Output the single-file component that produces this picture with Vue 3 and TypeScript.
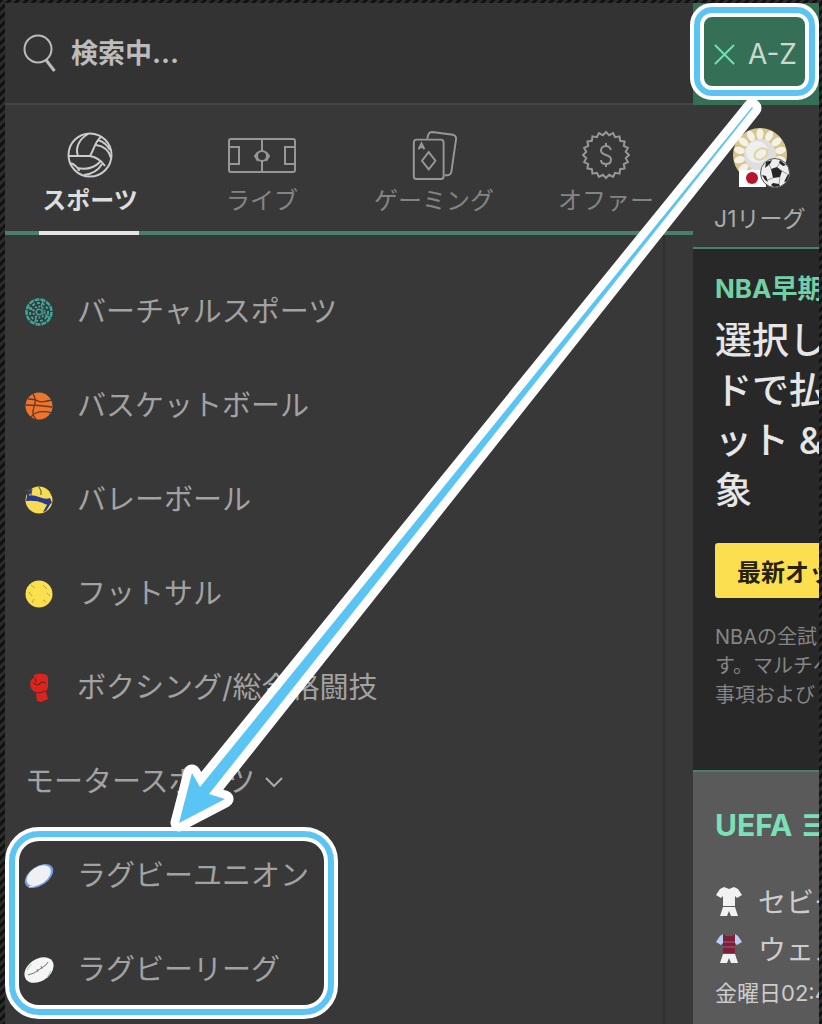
<script setup lang="ts">
import { ref } from 'vue'

interface Tab {
  id: string
  label: string
}
interface Sport {
  id: string
  label: string
}

const tabs: Tab[] = [
  { id: 'sports', label: 'スポーツ' },
  { id: 'live', label: 'ライブ' },
  { id: 'gaming', label: 'ゲーミング' },
  { id: 'offers', label: 'オファー' },
]

const sports: Sport[] = [
  { id: 'virtual', label: 'バーチャルスポーツ' },
  { id: 'basketball', label: 'バスケットボール' },
  { id: 'volleyball', label: 'バレーボール' },
  { id: 'futsal', label: 'フットサル' },
  { id: 'boxing', label: 'ボクシング/総合格闘技' },
]

const rugby: Sport[] = [
  { id: 'union', label: 'ラグビーユニオン' },
  { id: 'league', label: 'ラグビーリーグ' },
]

const active = ref('sports')
const query = ref('')

const badge: string = Array.from({ length: 40 }, (_, i) => {
  const r = i % 2 ? 20 : 23
  const a = (i * Math.PI) / 20
  return `${(24 + r * Math.sin(a)).toFixed(2)},${(24 - r * Math.cos(a)).toFixed(2)}`
}).join(' ')
const petals: number[] = Array.from({ length: 14 }, (_, i) => (i * 360) / 14)
</script>

<template>
  <div class="frame">
    <div class="shell">
      <aside class="menu">
        <label class="search">
          <svg class="search-icon" viewBox="0 0 36 40" aria-hidden="true">
            <circle cx="15" cy="16" r="13.5" />
            <path d="M23 27l8.500 11" stroke-width="3" />
          </svg>
          <input v-model="query" type="text" placeholder="検索中..." aria-label="検索" />
        </label>

        <nav class="tabs">
          <button
            v-for="t in tabs"
            :key="t.id"
            type="button"
            class="tab"
            :class="{ active: active === t.id }"
            @click="active = t.id"
          >
            <svg v-if="t.id === 'sports'" class="tab-icon ball" viewBox="0 0 48 48" aria-hidden="true">
              <circle cx="24" cy="24" r="21.500" />
              <path d="M24 25C28 19 29 10 35 6M24 25H3M24 25c6 1 11 4 15 10M12 25C9 17 13 8 22 3M30 14c8 1 13 5 15 13M32 9c6 2 10 6 12 10M4 32c5 1 9 6 9 8M11 37c9 2 17 0 23-6M18 44c8-1 14-4 18-11" />
            </svg>
            <svg v-else-if="t.id === 'live'" class="tab-icon pitch" viewBox="0 0 70 48" aria-hidden="true">
              <rect x="2" y="8" width="66" height="33" rx="2" />
              <path d="M2 16h10v17H2M68 16H58v17h10M35 8v12M35 30v11M31 21l-3 4 3 5M39 21l3 4-3 5" />
              <circle cx="35" cy="25" r="5" />
            </svg>
            <svg v-else-if="t.id === 'gaming'" class="tab-icon cards" viewBox="0 0 48 52" aria-hidden="true">
              <rect x="3" y="10" width="31" height="41" rx="3" />
              <path d="M17 9l1-4q1-3 4-3l22 3q3 1 3 4l-5 35q-1 3-4 3h-3M18.500 23l7 9-7 9-7-9zM8 20l3-6 3 6M9 18h4" />
            </svg>
            <svg v-else class="tab-icon" viewBox="0 0 48 48" aria-hidden="true">
              <polygon :points="badge" />
              <path d="M29 19c-1-3-3-4-5-4-3 0-5 2-5 4.500 0 6 10 3 10 9 0 3-2 4.500-5 4.500s-5-1.500-5-4M24 12v3M24 33v3" />
            </svg>
            <span>{{ t.label }}</span>
          </button>
        </nav>

        <div class="lists">
          <ul>
            <li v-for="s in sports" :key="s.id">
              <a href="#" class="row">
                <svg class="sport-icon" viewBox="0 0 28 28" aria-hidden="true">
                  <g v-if="s.id === 'virtual'" fill="none" stroke="#3fa59b">
                    <circle cx="14" cy="14" r="12.500" stroke-width="2.500" stroke-dasharray="5 1" />
                    <circle cx="14" cy="14" r="9" stroke-width="2" stroke-dasharray="3 2" />
                    <circle cx="14" cy="14" r="5.500" stroke-width="2" stroke-dasharray="2 1.500" />
                    <path d="M11 14l2-3 4 1v4l-4 1zM3 9l5 3M20 17l5 3M10 25l1-6M18 3l-2 6" stroke-width="1.500" />
                  </g>
                  <g v-else-if="s.id === 'basketball'">
                    <circle cx="14" cy="14" r="13.500" fill="#ee762c" />
                    <path d="M1 13q13 0 26 2M8 2q4 5 1 13t2 12M3 7q7 0 10 2t14-1M6 25q6-8 21-4" fill="none" stroke="#623b27" stroke-width="1.300" />
                  </g>
                  <g v-else-if="s.id === 'volleyball'">
                    <circle cx="14" cy="14" r="13.500" fill="#f6dc52" />
                    <path d="M2 10q5-2 12 1 7 3 11 1l2 5q-5 3-9 0-7-3-17-2zM2 7l5-5-1 5-4 4zM26 17l-5 8-3 1 5-9z" fill="#29378c" />
                    <path d="M14 1q3 4 2 8M7 3l-1 6M0 5l3-2M25 6l2 4" fill="none" stroke="#505048" stroke-width="1" />
                  </g>
                  <g v-else-if="s.id === 'futsal'">
                    <circle cx="14" cy="14" r="13.500" fill="#fadf4f" />
                    <path d="M6 5l4 3M18 5l4 4M4 12l3 4M9 19l-2 4M18 20l3 2M22 13l3 3" fill="none" stroke="#b9a646" stroke-width="1" />
                  </g>
                  <g v-else>
                    <path d="M9 1q5-2 10-1 4 1 4 4v9l-2 5 2 7-7 3-4-1-1-8q-5-3-6-8 0-6 4-7z" fill="#dc241f" />
                    <path d="M8 9l5 2 4-3 4 1M10 4l1 4M10 18l4 1 7-2" fill="none" stroke="#6e2424" stroke-width="1.200" />
                  </g>
                </svg>
                <span>{{ s.label }}</span>
              </a>
            </li>
            <li>
              <button type="button" class="row expand">
                <span>モータースポーツ</span>
                <svg viewBox="0 0 18 12" aria-hidden="true"><path d="M1 2l8 8 8-8" /></svg>
              </button>
            </li>
          </ul>
          <div class="highlight">
            <ul>
              <li v-for="s in rugby" :key="s.id">
                <a href="#" class="row">
                  <svg class="sport-icon" viewBox="0 0 28 28" aria-hidden="true">
                    <g v-if="s.id === 'union'">
                      <ellipse cx="14" cy="14" rx="16" ry="9.500" transform="rotate(-35 14 14)" fill="#6f9fe2" />
                      <ellipse cx="14" cy="13.500" rx="13.500" ry="8.500" transform="rotate(-35 14 14)" fill="#f0f0f3" />
                      <path d="M4 25q13-1 21-14" fill="none" stroke="#f4f4f4" stroke-width="1" />
                    </g>
                    <g v-else>
                      <ellipse cx="14" cy="14" rx="16" ry="11" transform="rotate(-35 14 14)" fill="#f5f5f5" />
                      <path d="M3 19l6-2 12-8 2-3M12 13l1 3M16 10l1 3" fill="none" stroke="#777" stroke-width="1" />
                      <path d="M2 14l4-6M22 22l4-7" fill="none" stroke="#8fd890" stroke-width="1" />
                    </g>
                  </svg>
                  <span>{{ s.label }}</span>
                </a>
              </li>
            </ul>
            <div class="ring ring-large"></div>
          </div>
        </div>
      </aside>

      <main class="content">
        <button type="button" class="az">
          <svg viewBox="0 0 22 22" aria-hidden="true"><path d="M1 1l20 20M21 1L1 21" /></svg>
          <span>A-Z</span>
          <span class="ring ring-small"></span>
        </button>

        <a href="#" class="league">
          <svg viewBox="0 0 60 62" aria-hidden="true">
            <circle cx="28" cy="28" r="27" fill="#d8c68f" />
            <ellipse v-for="a in petals" :key="a" cx="28" cy="7" rx="3.500" ry="5.500" :transform="`rotate(${a} 28 28)`" fill="#f5f1e6" />
            <circle cx="28" cy="28" r="16" fill="#dedede" />
            <circle cx="25" cy="25" r="11" fill="#efefed" />
            <ellipse cx="29" cy="27" rx="7" ry="5" transform="rotate(-35 29 27)" fill="none" stroke="#e2d29e" stroke-width="2" />
            <rect x="7" y="43" width="27" height="17" fill="#fff" />
            <circle cx="20" cy="51" r="6" fill="#b7152e" />
            <circle cx="43" cy="46" r="14.500" fill="#eee" stroke="#555" />
            <path d="M39 42l6-2 5 4-2 6-7 1zM34 35l6-2-2 4-5 4zM48 33l6 5-3 1-4-3zM30 48l4 1 2 6-3-2zM56 47l1 1-2 6-3 1zM41 56l6 1 1 2-6 1-3-2z" fill="#272727" />
            <path d="M39 42l-2-5M45 40l3-4M50 44l5 3M48 50l-1 7M41 51l-6 2" stroke="#999" />
          </svg>
          <span>J1リーグ</span>
        </a>

        <section class="promo">
          <h2>NBA早期</h2>
          <p class="headline">選択し<br />ドで払<br />ット &amp;<br />象</p>
          <button type="button" class="odds">最新オッズ</button>
          <p class="terms">NBAの全試<br />す。マルチベ<br />事項および</p>
        </section>

        <section class="match">
          <h2>UEFA ヨ</h2>
          <div class="team">
            <svg viewBox="0 0 26 30" aria-hidden="true">
              <path d="M8 1l5 2 5-2 4 2 4 6-5 3-2-2v10H7V10l-2 2-5-3 4-6zM7 21h12l3 9h-7l-2-5-2 5H4z" fill="#f2f2f2" />
            </svg>
            <span>セビージャ</span>
          </div>
          <div class="team">
            <svg viewBox="0 0 26 30" aria-hidden="true">
              <path d="M7 1L4 3 0 9l5 3 3-3zM19 1l3 2 4 6-5 3-3-3z" fill="#b8cff5" />
              <path d="M7 1l3 2h6l3-2v19H7z" fill="#7c1f3b" />
              <path d="M7 9h12M7 14h12" stroke="#a65f73" />
              <path d="M7 21h12l3 9h-7l-2-5-2 5H4z" fill="#f2f2f2" />
            </svg>
            <span>ウェスト</span>
          </div>
          <time>金曜日02:45</time>
        </section>
      </main>
    </div>

    <svg class="arrow" viewBox="0 0 822 1024" preserveAspectRatio="none" aria-hidden="true">
      <path class="arrow-edge" d="M752 107L200 787 192 773 179 823 225 799 209 794 753 108z" />
      <path class="arrow-fill" d="M752 107L200 787 192 773 179 823 225 799 209 794 753 108z" />
    </svg>
  </div>
</template>

<style>
body {
  margin: 0;
  background: #222;
}
</style>

<style scoped>
* {
  box-sizing: border-box;
}
.frame {
  position: relative;
  display: flex;
  min-height: 100vh;
  padding: 3px 3px 0 5px;
  overflow: hidden;
  background: repeating-linear-gradient(135deg, #111 0 2px, #2c2c2c 3px 5px, #111 6px);
  font-family: Inter, "Noto Sans CJK JP", sans-serif;
  color: #aaa;
}
.shell {
  flex: 1;
  min-width: 0;
  display: grid;
  grid-template-columns: minmax(0, 1fr) 126px;
}
button {
  font: inherit;
  color: inherit;
  border: 0;
  padding: 0;
  background: none;
  cursor: pointer;
}
a {
  color: inherit;
  text-decoration: none;
}
h2,
p,
ul {
  margin: 0;
  padding: 0;
}
ul {
  list-style: none;
}
svg {
  display: block;
  flex: none;
}

.menu {
  display: flex;
  flex-direction: column;
  background: #383838;
}
.search {
  display: flex;
  align-items: center;
  gap: 12px;
  height: 102px;
  padding: 0 18px;
  background: #333;
  border-bottom: 2px solid #444;
}
.search-icon {
  width: 36px;
  height: 40px;
  fill: none;
  stroke: #bbb;
  stroke-width: 2;
}
.search input {
  flex: 1;
  min-width: 0;
  height: 44px;
  padding: 0;
  border: 0;
  outline: 0;
  background: transparent;
  color: #ccc;
  font: 700 27px Inter, "Noto Sans CJK JP", sans-serif;
}
.search input::placeholder {
  color: #bcbcbc;
  opacity: 1;
}
.tabs {
  display: grid;
  grid-template-columns: repeat(4, 1fr);
  height: 130px;
  border-bottom: 4px solid #48806b;
}
.tab {
  position: relative;
  display: flex;
  flex-direction: column;
  align-items: center;
  padding: 25px 2px 0 0;
  gap: 5px;
  font-size: 24px;
  line-height: 32px;
  color: #848484;
  white-space: nowrap;
}
.tab-icon {
  width: 48px;
  height: 50px;
  fill: none;
  stroke: #979797;
  stroke-width: 2;
}
.tab-icon.pitch {
  width: 70px;
}
.tab.active {
  color: #ddd;
  font-weight: 700;
}
.tab.active .tab-icon {
  stroke: #ccc;
}
.tab.active::after {
  content: "";
  position: absolute;
  bottom: -4px;
  left: calc(50% - 52px);
  width: 100px;
  height: 4px;
  background: #e4e4e4;
}
.lists {
  flex: 1;
  margin-right: 28px;
  padding-top: 30px;
  border-right: 2px solid #313131;
}
.row {
  display: flex;
  align-items: center;
  gap: 24px;
  height: 94px;
  padding-left: 20px;
  font-size: 29px;
  line-height: 40px;
  color: #a2a2a2;
  white-space: nowrap;
}
.sport-icon {
  width: 28px;
  height: 28px;
  overflow: visible;
}
.expand {
  gap: 10px;
}
.expand svg {
  width: 18px;
  height: 12px;
  fill: none;
  stroke: #aaa;
  stroke-width: 2;
}
.highlight {
  position: relative;
}
.ring {
  position: absolute;
  border: 4px solid #fff;
  box-shadow: inset 0 0 0 6px #5ac4f4, inset 0 0 0 10px #fff;
  pointer-events: none;
}
.ring-large {
  top: -2px;
  left: 0;
  width: 333px;
  height: 192px;
  border-radius: 34px;
}
.ring-small {
  inset: 0 0 5px -3px;
  border-radius: 22px;
}

.content {
  display: flex;
  flex-direction: column;
  background: #383838;
}
.az {
  position: relative;
  display: flex;
  align-items: center;
  gap: 13px;
  height: 102px;
  padding-left: 21px;
  background: #357056;
  color: #ccd8d1;
  font-size: 28px;
}
.az svg {
  width: 21px;
  height: 21px;
  fill: none;
  stroke: #69e5ab;
  stroke-width: 2;
}
.league {
  display: flex;
  flex-direction: column;
  gap: 14px;
  height: 144px;
  padding: 22px 0 0 21px;
  border-bottom: 2px solid #48806b;
  overflow: hidden;
  font-size: 23px;
  line-height: 32px;
  white-space: nowrap;
}
.league svg {
  width: 60px;
  height: 62px;
  margin-left: 18px;
}
.promo,
.match {
  overflow: hidden;
  padding-left: 22px;
  white-space: nowrap;
}
.promo {
  height: 523px;
  padding-top: 25px;
  background: #282828;
  border-bottom: 2px solid #48806b;
}
.promo h2 {
  font-size: 26px;
  line-height: 30px;
  color: #72d0a6;
}
.headline {
  margin-top: 12px;
  font-size: 37px;
  font-weight: 500;
  line-height: 50px;
  color: #e6e6e6;
}
.odds {
  margin-top: 27px;
  height: 55px;
  padding: 0 22px;
  border-radius: 3px;
  background: #fbdf4f;
  color: #26220f;
  font-size: 24px;
  font-weight: 700;
}
.terms {
  margin-top: 25px;
  font-size: 20px;
  line-height: 29px;
  color: #858585;
}
.match {
  flex: 1;
  padding-top: 34px;
  background: #5a5a5a;
  color: #ccc;
}
.match h2 {
  margin-bottom: 33px;
  font-size: 30px;
  line-height: 38px;
  color: #7be0b8;
}
.team {
  display: flex;
  align-items: center;
  gap: 15px;
  height: 47px;
  font-size: 28px;
}
.team svg {
  width: 28px;
  height: 30px;
}
time {
  display: block;
  font-size: 22px;
  line-height: 44px;
}
.arrow {
  position: absolute;
  inset: 0;
  width: 100%;
  height: 100%;
  pointer-events: none;
}
.arrow-edge {
  fill: #fff;
  stroke: #fff;
  stroke-width: 17;
  stroke-linejoin: round;
}
.arrow-fill {
  fill: #5ac4f4;
}
</style>
